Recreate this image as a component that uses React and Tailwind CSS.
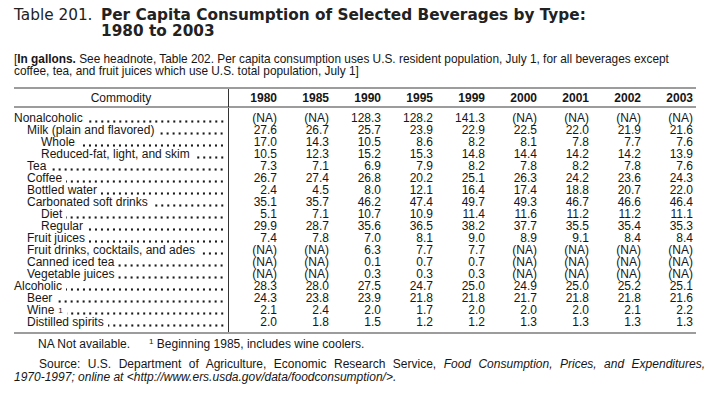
const years = ["1980", "1985", "1990", "1995", "1999", "2000", "2001", "2002", "2003"];

const rows = [
  { label: "Nonalcoholic", lvl: 0, v: ["(NA)", "(NA)", "128.3", "128.2", "141.3", "(NA)", "(NA)", "(NA)", "(NA)"] },
  { label: "Milk (plain and flavored)", lvl: 1, v: ["27.6", "26.7", "25.7", "23.9", "22.9", "22.5", "22.0", "21.9", "21.6"] },
  { label: "Whole", lvl: 2, v: ["17.0", "14.3", "10.5", "8.6", "8.2", "8.1", "7.8", "7.7", "7.6"] },
  { label: "Reduced-fat, light, and skim", lvl: 2, v: ["10.5", "12.3", "15.2", "15.3", "14.8", "14.4", "14.2", "14.2", "13.9"] },
  { label: "Tea", lvl: 1, v: ["7.3", "7.1", "6.9", "7.9", "8.2", "7.8", "8.2", "7.8", "7.6"] },
  { label: "Coffee", lvl: 1, v: ["26.7", "27.4", "26.8", "20.2", "25.1", "26.3", "24.2", "23.6", "24.3"] },
  { label: "Bottled water", lvl: 1, v: ["2.4", "4.5", "8.0", "12.1", "16.4", "17.4", "18.8", "20.7", "22.0"] },
  { label: "Carbonated soft drinks", lvl: 1, v: ["35.1", "35.7", "46.2", "47.4", "49.7", "49.3", "46.7", "46.6", "46.4"] },
  { label: "Diet", lvl: 2, v: ["5.1", "7.1", "10.7", "10.9", "11.4", "11.6", "11.2", "11.2", "11.1"] },
  { label: "Regular", lvl: 2, v: ["29.9", "28.7", "35.6", "36.5", "38.2", "37.7", "35.5", "35.4", "35.3"] },
  { label: "Fruit juices", lvl: 1, v: ["7.4", "7.8", "7.0", "8.1", "9.0", "8.9", "9.1", "8.4", "8.4"] },
  { label: "Fruit drinks, cocktails, and ades", lvl: 1, v: ["(NA)", "(NA)", "6.3", "7.7", "7.7", "(NA)", "(NA)", "(NA)", "(NA)"] },
  { label: "Canned iced tea", lvl: 1, v: ["(NA)", "(NA)", "0.1", "0.7", "0.7", "(NA)", "(NA)", "(NA)", "(NA)"] },
  { label: "Vegetable juices", lvl: 1, v: ["(NA)", "(NA)", "0.3", "0.3", "0.3", "(NA)", "(NA)", "(NA)", "(NA)"] },
  { label: "Alcoholic", lvl: 0, v: ["28.3", "28.0", "27.5", "24.7", "25.0", "24.9", "25.0", "25.2", "25.1"] },
  { label: "Beer", lvl: 1, v: ["24.3", "23.8", "23.9", "21.8", "21.8", "21.7", "21.8", "21.8", "21.6"] },
  { label: "Wine", lvl: 1, sup: "1", v: ["2.1", "2.4", "2.0", "1.7", "2.0", "2.0", "2.0", "2.1", "2.2"] },
  { label: "Distilled spirits", lvl: 1, v: ["2.0", "1.8", "1.5", "1.2", "1.2", "1.3", "1.3", "1.3", "1.3"] },
];

function Label({ r }) {
  const pad = r.lvl === 0 ? "pl-0" : r.lvl === 1 ? "pl-[13px]" : "pl-[27px]";
  return (
    <div className={`flex h-[12px] pr-[3px] ${pad}`}>
      <span className="whitespace-nowrap">
        {r.label}
        {r.sup ? <sup className="relative -top-[1px] ml-[4px] text-[8px]">{r.sup}</sup> : null}
      </span>
      <span className="ml-[4px] min-w-0 flex-1 bg-[radial-gradient(circle_at_3px_9.5px,#1a1a1a_0.9px,transparent_1.4px)] bg-[length:6px_12px] bg-right bg-repeat-x" />
    </div>
  );
}

export default function App() {
  return (
    <div className="h-[400px] w-[719px] overflow-hidden bg-white px-[14px] pt-[7px] text-[12px] text-[#161616] [font-family:'Liberation_Sans',Arial,sans-serif]">
      {/* Title */}
      <div className="flex text-[15.3px] leading-[16px] text-[#222] [font-family:'DejaVu_Sans',Verdana,sans-serif]">
        <div className="w-[87px] shrink-0">Table 201.</div>
        <div className="font-bold">
          Per Capita Consumption of Selected Beverages by Type:
          <br />
          1980 to 2003
        </div>
      </div>

      {/* Headnote */}
      <p className="mt-[14px] text-[11.85px] leading-[12px]">
        [<span className="font-bold">In gallons.</span> See headnote, Table 202. Per capita consumption uses U.S. resident population, July 1, for all beverages except
        <br />
        coffee, tea, and fruit juices which use U.S. total population, July 1]
      </p>

      {/* Table */}
      <div className="mt-[10px] w-[682px] border-y-2 border-[#9c9c9c]">
        <div className="grid h-[19px] grid-cols-[215px_48px_repeat(8,52px)] items-center border-b-2 border-[#9c9c9c]">
          <div className="flex h-full items-center justify-center border-r border-[#333]">Commodity</div>
          {years.map((y) => (
            <div key={y} className="text-right font-bold">{y}</div>
          ))}
        </div>
        <div className="flex">
          <div className="w-[215px] shrink-0 border-r border-[#333] pb-[4px] pt-[4px] leading-[12px]">
            {rows.map((r) => (
              <Label key={r.label} r={r} />
            ))}
          </div>
          <div className="grid auto-rows-[12px] grid-cols-[48px_repeat(8,52px)] pt-[4px] leading-[12px]">
            {rows.map((r) =>
              r.v.map((val, i) => (
                <div key={r.label + i} className="text-right">{val}</div>
              ))
            )}
          </div>
        </div>
      </div>

      {/* Footnotes */}
      <div className="mt-[4px] pl-[24px] leading-[13px]">
        NA Not available.
        <span className="ml-[19px]"><sup className="text-[8px]">1</sup> Beginning 1985, includes wine coolers.</span>
      </div>
      <div className="mt-[7px] leading-[13px]">
        <div className="text-justify indent-[25px] [text-align-last:justify]">
          Source: U.S. Department of Agriculture, Economic Research Service, <i>Food Consumption, Prices, and Expenditures,</i>
        </div>
        <div className="italic">1970-1997; online at &lt;http://www.ers.usda.gov/data/foodconsumption/&gt;.</div>
      </div>
    </div>
  );
}
